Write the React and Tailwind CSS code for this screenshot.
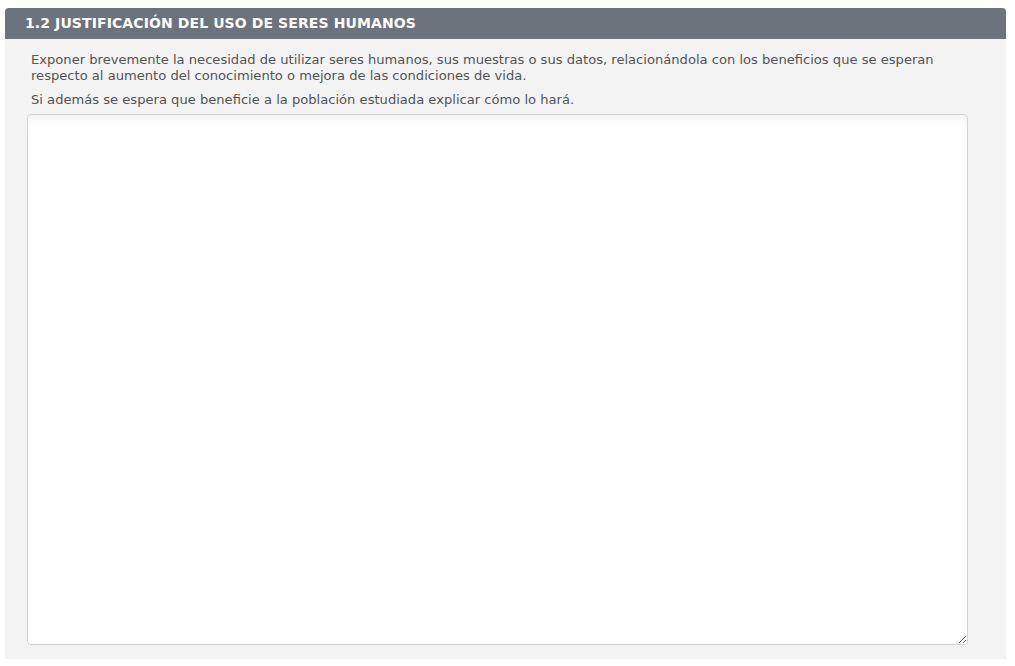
export default function App() {
  return (
    <div className="min-h-[666px] bg-white pt-2 pl-[5px] pr-[9px]" style={{ fontFamily: '"DejaVu Sans", sans-serif' }}>
      <div className="rounded-t-[4px] overflow-hidden">
        <div className="bg-[#6c737c] h-[31px] flex items-center pl-[20px] text-white font-bold text-[14px] tracking-[0.1px]">
          1.2 JUSTIFICACIÓN DEL USO DE SERES HUMANOS
        </div>
        <div className="bg-[#f3f3f3] pt-[13px] pb-[14px] pl-[22px] pr-[38px]">
          <div className="pl-[4px] text-[#555] text-[13.1px] leading-[16px]">
            <p>Exponer brevemente la necesidad de utilizar seres humanos, sus muestras o sus datos, relacionándola con los beneficios que se esperan respecto al aumento del conocimiento o mejora de las condiciones de vida.</p>
            <p className="mt-[8px]">Si además se espera que beneficie a la población estudiada explicar cómo lo hará.</p>
          </div>
          <textarea className="mt-[6px] block w-full h-[531px] bg-white border border-[#d4d4d4] rounded-[4px] shadow-[inset_0_8px_12px_-6px_rgba(0,0,0,0.08)] outline-none" />
        </div>
      </div>
    </div>
  );
}
